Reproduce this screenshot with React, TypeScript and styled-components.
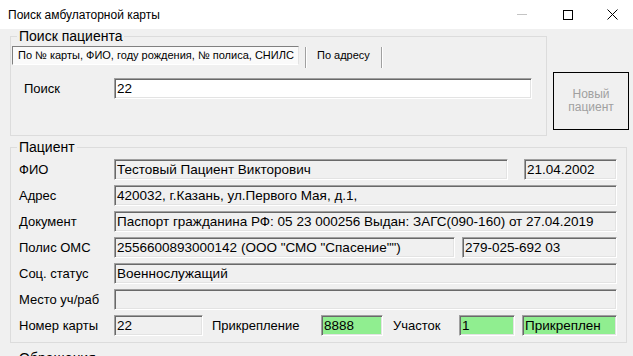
import React from "react";
import styled, { createGlobalStyle } from "styled-components";

const GlobalStyle = createGlobalStyle`
  html, body {
    margin: 0;
    padding: 0;
    background: #f0f0f0;
  }
  body {
    font-family: "Liberation Sans", Arial, sans-serif;
    overflow: hidden;
  }
`;

const Window = styled.div`
  width: 633px;
  height: 356px;
  overflow: hidden;
  display: flex;
  flex-direction: column;
  background: #f0f0f0;
  color: #000;
`;

const TitleBar = styled.div`
  height: 29px;
  flex: none;
  background: #fff;
  display: flex;
  align-items: center;
  padding-left: 8px;
`;

const Title = styled.div`
  flex: 1;
  font-size: 12px;
`;

const Controls = styled.div`
  display: flex;
  height: 29px;
`;

const CtrlButton = styled.div<{ $w?: number }>`
  width: ${(p) => p.$w ?? 46}px;
  display: flex;
  align-items: center;
  justify-content: center;
`;

const Body = styled.div`
  flex: 1;
  padding: 0 6px 0 10px;
  display: flex;
  flex-direction: column;
`;

const TopRow = styled.div`
  display: flex;
  align-items: flex-start;
`;

const Group = styled.fieldset<{ $w: number; $h: number }>`
  margin: 0;
  width: ${(p) => p.$w}px;
  height: ${(p) => p.$h}px;
  box-sizing: border-box;
  border: 1px solid #dcdcdc;
  flex: none;
  min-width: 0;
`;

const SearchGroup = styled(Group)`
  padding: 3px 0 0 0;
`;

const PatientGroup = styled(Group)`
  margin-top: 4px;
  padding: 5px 9px 0 8px;
`;

const LowerGroup = styled(Group)`
  margin-top: 8px;
  padding: 5px 9px 0 8px;
`;

const Legend = styled.legend<{ $shift?: number }>`
  font-size: 14px;
  line-height: 14px;
  padding: 0 2px;
  margin-left: ${(p) => p.$shift ?? -2}px;
  color: #000;
`;

const TabStrip = styled.div`
  display: flex;
  align-items: flex-start;
  height: 22px;
  margin-left: 1px;
  font-size: 11px;
`;

const ActiveTab = styled.div`
  width: 287px;
  height: 19px;
  box-sizing: border-box;
  padding-left: 5px;
  line-height: 17px;
  background: #fafafa;
  border-top: 1px solid #808080;
  border-left: 1px solid #808080;
  border-right: 1px solid #e3e3e3;
  border-bottom: 1px solid #ffffff;
  white-space: nowrap;
`;

const Tab = styled.div`
  margin-left: 10px;
  line-height: 19px;
  white-space: nowrap;
`;

const TabDivider = styled.div<{ $gap: number }>`
  width: 1px;
  height: 21px;
  margin-top: 1px;
  margin-left: ${(p) => p.$gap}px;
  background: #a0a0a0;
  border-right: 1px solid #fff;
`;

const SearchRow = styled.div`
  display: flex;
  align-items: center;
  margin-top: 10px;
  padding-left: 13px;
  height: 21px;
`;

const Label = styled.div<{ $w: number; $ml?: number }>`
  width: ${(p) => p.$w}px;
  margin-left: ${(p) => p.$ml ?? 0}px;
  flex: none;
  font-size: 13px;
  white-space: nowrap;
`;

const Field = styled.div<{ $w: number; $ml?: number; $bg?: string }>`
  width: ${(p) => p.$w}px;
  margin-left: ${(p) => p.$ml ?? 0}px;
  height: 21px;
  flex: none;
  box-sizing: border-box;
  padding-left: 2px;
  font-size: 13.5px;
  line-height: 19px;
  white-space: nowrap;
  overflow: hidden;
  background: ${(p) => p.$bg ?? "#f0f0f0"};
  border-top: 1px solid #a0a0a0;
  border-left: 1px solid #a0a0a0;
  border-right: 1px solid #ffffff;
  border-bottom: 1px solid #ffffff;
  box-shadow: inset 1px 1px 0 #696969, inset -1px -1px 0 #e3e3e3;
`;

const NewButton = styled.div`
  width: 76px;
  height: 58px;
  margin: 43px 0 0 6px;
  box-sizing: border-box;
  border: 1px solid #000;
  display: flex;
  align-items: center;
  justify-content: center;
  text-align: center;
  font-size: 12px;
  line-height: 13px;
  color: #a0a0a0;
  flex: none;
`;

const Rows = styled.div`
  display: flex;
  flex-direction: column;
  gap: 5px;
`;

const Row = styled.div`
  display: flex;
  align-items: center;
  height: 21px;
`;

const GREEN = "#90ee90";

export default function App() {
  return (
    <Window>
      <GlobalStyle />
      <TitleBar>
        <Title>Поиск амбулаторной карты</Title>
        <Controls>
          <CtrlButton>
            <svg width="10" height="10" viewBox="0 0 10 10">
              <line x1="0" y1="4.5" x2="10" y2="4.5" stroke="#c4c4c4" strokeWidth="1" />
            </svg>
          </CtrlButton>
          <CtrlButton>
            <svg width="10" height="10" viewBox="0 0 10 10">
              <rect x="0.5" y="0.5" width="9" height="9" fill="none" stroke="#000" strokeWidth="1" />
            </svg>
          </CtrlButton>
          <CtrlButton $w={42}>
            <svg width="11" height="11" viewBox="0 0 11 11">
              <path d="M0.5 0.5 L10.5 10.5 M10.5 0.5 L0.5 10.5" stroke="#000" strokeWidth="1" />
            </svg>
          </CtrlButton>
        </Controls>
      </TitleBar>

      <Body>
        <TopRow>
          <SearchGroup $w={537} $h={107}>
            <Legend $shift={6}>Поиск пациента</Legend>
            <TabStrip>
              <ActiveTab>По № карты, ФИО, году рождения, № полиса, СНИЛС</ActiveTab>
              <TabDivider $gap={6} />
              <Tab>По адресу</Tab>
              <TabDivider $gap={11} />
            </TabStrip>
            <SearchRow>
              <Label $w={90}>Поиск</Label>
              <Field $w={418} $bg="#fff">22</Field>
            </SearchRow>
          </SearchGroup>
          <NewButton>
            Новый
            <br />
            пациент
          </NewButton>
        </TopRow>

        <PatientGroup $w={617} $h={203}>
          <Legend>Пациент</Legend>
          <Rows>
            <Row>
              <Label $w={95}>ФИО</Label>
              <Field $w={394}>Тестовый Пациент Викторович</Field>
              <Field $w={93} $ml={16}>21.04.2002</Field>
            </Row>
            <Row>
              <Label $w={95}>Адрес</Label>
              <Field $w={503}>420032, г.Казань, ул.Первого Мая, д.1,</Field>
            </Row>
            <Row>
              <Label $w={95}>Документ</Label>
              <Field $w={503}>Паспорт гражданина РФ: 05 23 000256 Выдан: ЗАГС(090-160) от 27.04.2019</Field>
            </Row>
            <Row>
              <Label $w={95}>Полис ОМС</Label>
              <Field $w={341}>2556600893000142 (ООО "СМО "Спасение"")</Field>
              <Field $w={155} $ml={7}>279-025-692 03</Field>
            </Row>
            <Row>
              <Label $w={95}>Соц. статус</Label>
              <Field $w={503}>Военнослужащий</Field>
            </Row>
            <Row>
              <Label $w={95}>Место уч/раб</Label>
              <Field $w={503} />
            </Row>
            <Row>
              <Label $w={95}>Номер карты</Label>
              <Field $w={89}>22</Field>
              <Label $w={109} $ml={9}>Прикрепление</Label>
              <Field $w={62} $bg={GREEN}>8888</Field>
              <Label $w={66} $ml={10}>Участок</Label>
              <Field $w={56} $bg={GREEN}>1</Field>
              <Field $w={95} $ml={7} $bg={GREEN}>Прикреплен</Field>
            </Row>
          </Rows>
        </PatientGroup>

        <LowerGroup $w={617} $h={120}>
          <Legend>Обращения</Legend>
        </LowerGroup>
      </Body>
    </Window>
  );
}
